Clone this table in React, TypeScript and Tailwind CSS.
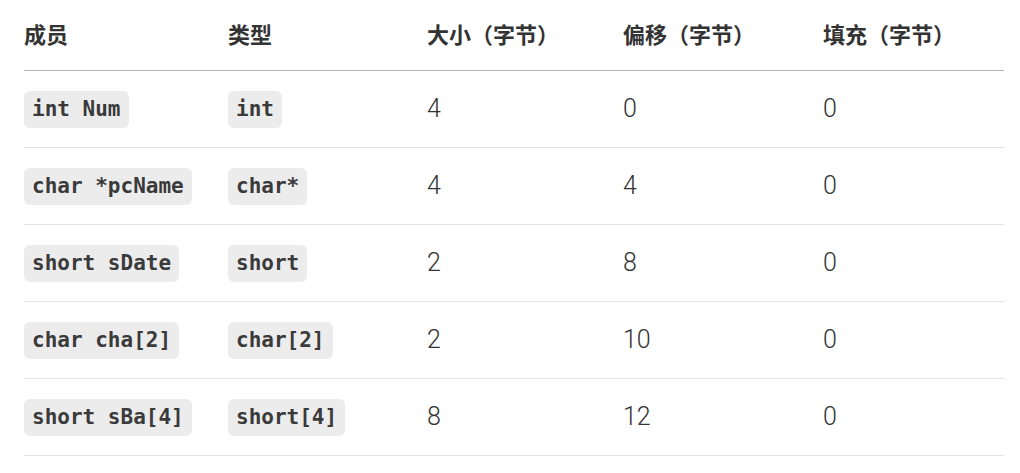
const headers = ["成员", "类型", "大小（字节）", "偏移（字节）", "填充（字节）"];

const rows = [
  { name: "int Num", type: "int", size: 4, offset: 0, pad: 0 },
  { name: "char *pcName", type: "char*", size: 4, offset: 4, pad: 0 },
  { name: "short sDate", type: "short", size: 2, offset: 8, pad: 0 },
  { name: "char cha[2]", type: "char[2]", size: 2, offset: 10, pad: 0 },
  { name: "short sBa[4]", type: "short[4]", size: 8, offset: 12, pad: 0 },
];

const cols = "grid grid-cols-[204px_199px_196px_200px_181px]";

function Code({ children }: { children: string }) {
  return (
    <code className="inline-block rounded-md bg-[#ececec] px-2 py-[5px] font-['DejaVu_Sans_Mono',monospace] text-[21px] leading-[27px] font-bold text-[#3a3a3a]">
      {children}
    </code>
  );
}

export default function App() {
  return (
    <main className="bg-white pr-4 pl-6 font-['Roboto','Noto_Sans_CJK_SC',sans-serif]">
      <div className={`${cols} h-[71px] items-center border-b border-[#b3b3b3]`}>
        {headers.map((h) => (
          <div key={h} className="text-[22px] font-bold text-[#333]">
            {h}
          </div>
        ))}
      </div>
      {rows.map((r) => (
        <div
          key={r.name}
          className={`${cols} h-[77px] items-center border-b border-[#e3e3e3] text-[25px] font-light text-[#333]`}
        >
          <div className="flex">
            <Code>{r.name}</Code>
          </div>
          <div className="flex">
            <Code>{r.type}</Code>
          </div>
          <div>{r.size}</div>
          <div>{r.offset}</div>
          <div>{r.pad}</div>
        </div>
      ))}
    </main>
  );
}
